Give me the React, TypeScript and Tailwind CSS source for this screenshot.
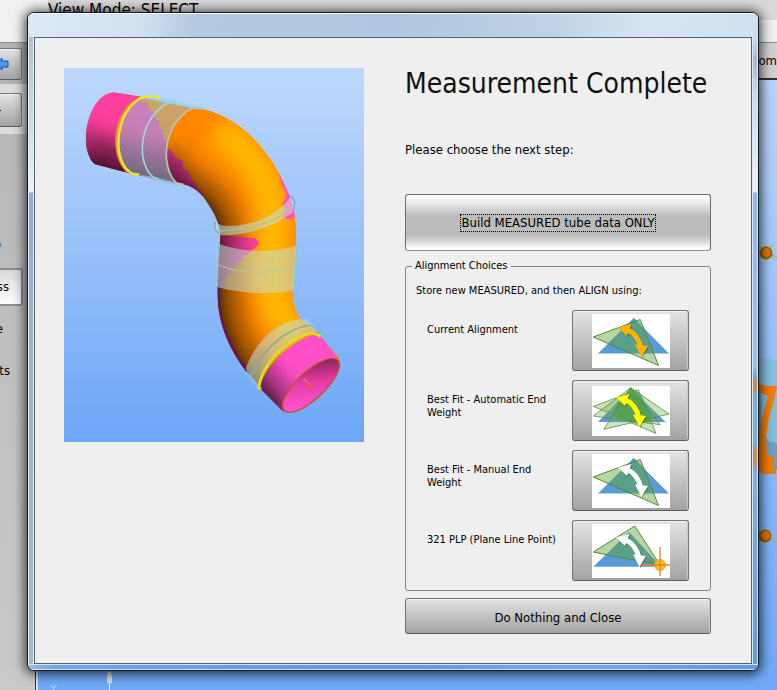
import React from 'react';

type Mode = 'current' | 'auto' | 'manual' | 'plp';

const choices: { mode: Mode; label: string }[] = [
  { mode: 'current', label: 'Current Alignment' },
  { mode: 'auto', label: 'Best Fit - Automatic End Weight' },
  { mode: 'manual', label: 'Best Fit - Manual End Weight' },
  { mode: 'plp', label: '321 PLP (Plane Line Point)' },
];

const grayButton =
  'rounded-[3px] border border-[#737373] border-b-[#5c5c5c] bg-gradient-to-b from-[#e4e4e4] to-[#a3a3a3] shadow-[inset_0_1px_0_#f4f4f4,inset_-1px_0_0_#c9c9c9]';

const SwingArrow: React.FC<{ color: string; transform?: string }> = ({ color, transform }) => (
  <g transform={transform}>
    <g transform="translate(0.8 1)" opacity="0.3">
      <path d="M35 15.500Q46.500 21 49 34" fill="none" stroke="#000" strokeWidth="5" />
      <path d="M26 13.500 39.500 10 35 22ZM49.500 43 43 30.500 56 32Z" fill="#000" />
    </g>
    <path d="M35 15.500Q46.500 21 49 34" fill="none" stroke={color} strokeWidth="5" />
    <path d="M26 13.500 39.500 10 35 22ZM49.500 43 43 30.500 56 32Z" fill={color} />
  </g>
);

const AlignIcon: React.FC<{ mode: Mode }> = ({ mode }) => {
  const green = { fill: '#70ad47', fillOpacity: 0.5, stroke: '#548a35', strokeWidth: 1 };

  if (mode === 'auto') {
    return (
      <svg width="78" height="50" viewBox="0 0 78 50" className="bg-white">
        <path d="M6 36 38.7 2.5 73.7 36Z" fill="#5b9bd5" />
        <g {...green} fillOpacity={0.36} strokeOpacity={0.75}>
          <path d="M1.3 20.3 46.3 3.7 64 47.5Z" />
          <path d="M1.3 30 38.7 1.7 68.3 38.7Z" />
          <path d="M77 28 38.7 1.7 11.7 43.3Z" />
        </g>
        <path d="M38.7 2 49 9 60 30 57 36 45 38 21 30 26 17Z" fill="#4d9a4a" fillOpacity="0.6" />
        <SwingArrow color="#ffff00" transform="translate(-2 -2)" />
      </svg>
    );
  }

  if (mode === 'plp') {
    return (
      <svg width="78" height="54" viewBox="0 0 78 54" className="bg-white">
        <path d="M1.3 42.7 37 8 69 42.7Z" fill="#5b9bd5" />
        <path d="M1.3 28 42.7 2 68 41Z" {...green} />
        <path d="M37 8 16 29 68 41Z" fill="#2f8a78" fillOpacity="0.2" />
        <circle cx="68" cy="41" r="5.5" fill="#ffc000" stroke="#e39a10" strokeWidth="0.8" />
        <path d="M68 23V52M48 41H77.7" stroke="#f07830" strokeWidth="1.3" />
        <SwingArrow color="#ffffff" transform="translate(-2 0)" />
      </svg>
    );
  }

  return (
    <svg width="78" height="54" viewBox="0 0 78 54" className="bg-white">
      <path d="M6 39.5 41.7 4 77 39.5Z" fill="#5b9bd5" />
      <path d="M1.3 23 48.3 5.5 66.5 51.5Z" {...green} />
      <path d="M41.7 4 38 9.5 15 30 35.5 39.5 61 39.5 49 9Z" fill="#2f8a78" fillOpacity="0.2" />
      <SwingArrow color={mode === 'current' ? '#ffb400' : '#ffffff'} />
    </svg>
  );
};

const TubePreview: React.FC = () => {
  const outline =
    'M162 97 243 110 400 144C425 146 443 150 460 156 540 185 600 245 645 318 680 380 706 440 708 500L708 560 700 650C694 700 698 750 725 780L770 815 838 895 840 912C835 960 760 1040 690 1057L668 1054 600 985 555 930C510 870 485 810 476 750 468 690 476 600 481 530 481 500 468 465 440 425 415 385 380 372 350 370L275 355 183 333 105 313C85 300 77 260 77 235 80 160 115 100 162 97Z';
  const darkSide =
    'M60 310 183 350 350 385C420 400 470 460 475 525 470 600 465 680 474 755 485 820 520 890 560 940L665 1065';

  return (
    <svg width="300" height="374" viewBox="12 24 900 1122" className="shrink-0" role="img" aria-label="Measured tube">
      <defs>
        <linearGradient id="sky" x1="0" y1="0" x2="0" y2="1">
          <stop offset="0" stopColor="#bed8fc" />
          <stop offset="0.5" stopColor="#97c0f9" />
          <stop offset="1" stopColor="#6ca6f7" />
        </linearGradient>
        <linearGradient id="bore" gradientUnits="userSpaceOnUse" x1="710" y1="1030" x2="810" y2="900">
          <stop offset="0" stopColor="#ff52d2" />
          <stop offset="0.5" stopColor="#e43ba0" />
          <stop offset="1" stopColor="#6e1a42" />
        </linearGradient>
        <clipPath id="tube">
          <path d={outline} />
        </clipPath>
        <filter id="soft" filterUnits="userSpaceOnUse" x="-300" y="-300" width="1600" height="1800">
          <feGaussianBlur stdDeviation="30" />
        </filter>
        <filter id="softer" filterUnits="userSpaceOnUse" x="-300" y="-300" width="1600" height="1800">
          <feGaussianBlur stdDeviation="14" />
        </filter>
      </defs>
      <rect x="12" y="24" width="900" height="1122" fill="url(#sky)" />

      <g clipPath="url(#tube)">
        <path d={outline} fill="#ff8600" />
        <path
          d="M470 210C570 270 635 360 640 490L630 640C630 730 660 780 720 830"
          fill="none"
          stroke="#ffbc00"
          strokeWidth="90"
          filter="url(#soft)"
        />
        {/* measured surface showing through */}
        <path
          d="M60 80H245V128H265L262 140 280 155 288 180H298V205L310 212V238L322 245V265L330 268 345 285 348 294 370 303 366 322 388 337 392 352 405 370 430 405 400 420H60Z"
          fill="#ff3f9e"
        />
        <path
          d="M470 524 585 535 597 548 588 562 575 570 567 583H550V600L530 608V625H515L512 645H497V665L490 680H482C476 760 500 850 575 940L550 950 460 760Z"
          fill="#ff3f9e"
        />
        <path d="M655 335 690 405 710 470 685 478 668 470 676 445 668 432 680 405 664 370Z" fill="#ff4fc0" />
        <path d="M780 820C700 835 625 910 598 985L668 1070 850 920Z" fill="#ff4fc6" />
        <path d="M-60 300 183 350 360 390" fill="none" stroke="#000" strokeOpacity="0.3" strokeWidth="240" filter="url(#soft)" />
        <path d={darkSide} fill="none" stroke="#000" strokeOpacity="0.42" strokeWidth="140" filter="url(#soft)" />
        <path d={darkSide} fill="none" stroke="#000" strokeOpacity="0.4" strokeWidth="40" filter="url(#softer)" />
      </g>

      {/* upper band */}
      <path
        d="M243 110 400 144C345 165 310 250 325 310 330 340 340 362 352 372L215 343C150 310 165 150 243 110Z"
        fill="#93bfd0"
        fillOpacity="0.5"
      />
      <path d="M285 108 440 148 420 151 320 130 250 118Z" fill="#8fd0ec" fillOpacity="0.6" />
      <path d="M235 343 280 350 370 372 345 376 270 358Z" fill="#8fc4d4" fillOpacity="0.7" />
      <path d="M236 118C160 155 150 290 205 335" fill="none" stroke="#ee9428" strokeWidth="9" />
      <path d="M300 116C285 106 245 106 228 124 165 170 155 310 218 341L238 344" fill="none" stroke="#eeea28" strokeWidth="7" />
      <path d="M365 130C345 124 325 126 308 138 235 195 230 310 280 352L296 357" fill="none" stroke="#a5d2db" strokeWidth="5" />
      <path d="M440 149C420 140 395 141 378 156 308 210 302 325 350 369L370 373" fill="none" stroke="#c0c2a4" strokeWidth="5" />

      {/* middle band */}
      <path
        d="M470 486C478 500 500 497 530 497 590 490 650 465 690 413L704 428C710 440 704 458 690 463 630 505 550 530 480 525 465 515 461 494 470 486Z"
        fill="#c0e0d8"
        fillOpacity="0.55"
      />
      <path d="M466 486C462 500 466 515 480 522M693 408 704 426 700 455" fill="none" stroke="#739da0" strokeWidth="4" strokeOpacity="0.75" />
      <path d="M480 512C560 510 640 490 690 448" fill="none" stroke="#b5c092" strokeWidth="3" />

      {/* lower band */}
      <path d="M470 549C535 575 640 583 713 555L705 680 697 692C620 705 540 700 474 682L466 675Z" fill="#c0e0d8" fillOpacity="0.53" />
      <path d="M474 550 467 675M711 557 703 680" stroke="#83c4df" strokeWidth="6" strokeOpacity="0.75" />
      <path d="M474 614C540 643 640 643 705 620" fill="none" stroke="#b4c8a0" strokeWidth="3" />

      {/* end band */}
      <path
        d="M557 925C585 850 640 790 720 777L745 777 762 800 770 817C700 835 620 900 598 987L570 952Z"
        fill="#c0e0d8"
        fillOpacity="0.55"
      />
      <path d="M573 950C600 880 670 805 752 795L763 805" fill="none" stroke="#88aaa0" strokeWidth="5" />
      <path d="M557 935 600 985M725 778 745 782 765 810" stroke="#8bcbe7" strokeWidth="6" fill="none" strokeOpacity="0.7" />
      <path d="M604 985H596C604 910 690 826 755 820L778 826 777 833" fill="none" stroke="#dfdc18" strokeWidth="8" />

      <ellipse cx="753" cy="976" rx="110" ry="41" transform="rotate(-43 753 976)" fill="url(#bore)" stroke="#b85a23" strokeWidth="4" />
      <path d="M730 953 751 978" stroke="#e88a65" strokeWidth="3" />
      <circle cx="751" cy="978" r="6" fill="#f05a20" />
    </svg>
  );
};

const Marker: React.FC = () => (
  <svg width="19" height="20" viewBox="0 0 19 20">
    <path d="M8 0V20M1 2 17 17M1 17 15 2M9 10 19 14" stroke="#93b83c" strokeWidth="1" />
    <circle cx="8" cy="10" r="6.4" fill="#a75600" />
    <circle cx="8.5" cy="9.500" r="4.4" fill="#dc7c00" />
  </svg>
);

const Workspace: React.FC = () => (
  <div className="flex min-h-screen flex-col bg-[#b9b9b9] text-black">
    <header className="flex h-[43px] border-b border-[#8c8c8c] bg-[#f0f0f0]">
      <div className="w-12 shrink-0" />
      <div className="h-5 flex-1 bg-[#d9d9d9] text-[17px] leading-5 whitespace-nowrap">View Mode: SELECT</div>
    </header>
    <div className="flex flex-1">
      <nav className="flex w-9 shrink-0 flex-col items-start border-r border-[#303030] bg-gradient-to-b from-[#b6b6b6] to-[#cacaca]">
        <div className="w-full bg-[#b3b3b3] pt-[5px] pb-1">
          <button aria-label="Back" className={`flex h-8 w-[22px] items-center rounded-l-none border-l-0 ${grayButton}`}>
            <svg width="9" height="14" viewBox="0 0 9 14">
              <path d="M-4 7 2 1V4H8V10H2V13Z" fill="#419bf1" stroke="#1451a3" />
            </svg>
          </button>
        </div>
        <div className="w-full bg-[#dcdcdc] pt-[9px] pb-[7px]">
          <button aria-label="Remove" className={`flex h-[34px] w-[22px] items-center rounded-l-none border-l-0 ${grayButton}`}>
            <span className="h-px w-px bg-black" />
          </button>
        </div>
        <div className="mt-[109px] h-1 w-px bg-[#3f83c7]" />
        <button className="mt-[21px] flex h-[38px] w-[23px] items-center justify-end rounded-r-[3px] border-2 border-l-0 border-[#8c8c8c] bg-gradient-to-b from-[#d9d9d9] to-white pr-3 text-[13px]">
          ss
        </button>
        <span className="mt-[13px] flex w-[3px] justify-end text-[13px] leading-5">e</span>
        <span className="mt-[22px] flex w-[10px] justify-end text-[13px] leading-5">ts</span>
      </nav>
      <div className="flex flex-1 flex-col">
        <div className="flex h-[37px] items-center justify-end border-b-2 border-[#303030] bg-[#d0d0d0] text-[13px]">om</div>
        <main className="relative flex-1 border-l-2 border-[#e4e4e4] bg-gradient-to-b from-[#b9d4fb] to-[#6fa8f7]">
          <div className="absolute top-[163px] right-0">
            <Marker />
          </div>
          <div className="absolute top-[278px] right-0">
            <svg width="26" height="120" viewBox="0 0 26 120">
              <path d="M0 5 8 0 26 2V95H18L0 84Z" fill="#85bfe0" />
              <path d="M0 30H10V78L26 86V112H8V40Z" fill="#6f9ec5" />
              <path d="M14 38H26V84H18Z" fill="#7fc0da" />
              <path d="M8 26 16 28H26L23 42 18 60 15 78 16 98 23 98V112H25V116H12L8 112V76L11 60 17 38 8 34Z" fill="#f77c00" />
            </svg>
          </div>
          <div className="absolute top-[446px] right-px">
            <Marker />
          </div>
          <svg className="absolute bottom-0 left-0" width="90" height="20" viewBox="0 0 90 20">
            <path d="M71.500 0V20" stroke="#f4f4f4" />
            <path d="M70 2H73L74 6V13H69V6Z" fill="#dededb" />
            <path d="M12.500 15 15.500 18.500 18.500 15M15.500 18V21" fill="none" stroke="#cfe2fb" />
          </svg>
        </main>
      </div>
    </div>
  </div>
);

const MeasurementDialog: React.FC = () => (
  <div
    role="dialog"
    aria-labelledby="dialog-title"
    className="overflow-hidden rounded-[7px] border border-[#161c26] bg-[#dfe9f5] shadow-[0_1px_12px_2px_rgba(0,0,0,0.75)]"
  >
    <div className="h-6 border-t border-[#f4faff] bg-[linear-gradient(100deg,#dce9f5_0%,#d3e2f0_15%,#b4cae2_23%,#aec6df_50%,#bfd3e6_72%,#d7e5f2_85%,#cfe0f0_100%)]" />
    <div className="flex">
      <div className="w-[6px] border-x border-[#e2eef9] bg-[linear-gradient(to_bottom,#b2c0cf_0px,#d5e0ea_100px,#eef4f8_155px,#93adc9_156px,#9db3c7_300px,#a3b9cf_100%)]" />
      <div className="flex min-w-0 flex-1 gap-[41px] border border-[#56616f] bg-[#efefef] pt-[30px] pr-10 pb-[29px] pl-[29px] text-black">
        <TubePreview />
        <div className="flex min-w-0 flex-1 flex-col">
          <h1 id="dialog-title" className="text-[28px] leading-8 whitespace-nowrap text-[#111]">
            Measurement Complete
          </h1>
          <p className="mt-10 text-[13px] leading-5">Please choose the next step:</p>
          <button
            autoFocus
            className="mt-[34px] flex h-[57px] items-center justify-center rounded-[3px] border border-[#6c6c6c] border-b-[#909090] bg-[linear-gradient(to_bottom,#ffffff_0%,#e4e4e4_18%,#bcbcbc_38%,#bcbcbc_74%,#ffffff_98%)] pt-px text-[13px] outline-none"
          >
            <span className="border border-dotted border-black leading-4">Build MEASURED tube data ONLY</span>
          </button>
          <fieldset className="mt-[7px] rounded-[3px] border border-[#858585] pr-[21px] pb-[9px] pl-[10px] text-[11px] leading-[13px]">
            <legend className="-ml-1 px-[3px] leading-4">Alignment Choices</legend>
            <p className="mt-[10px]">Store new MEASURED, and then ALIGN using:</p>
            <div className="mt-[13px] flex flex-col gap-[9px]">
              {choices.map(({ mode, label }) => (
                <div key={mode} className="flex items-start justify-between pl-[11px]">
                  <label htmlFor={`align-${mode}`} className="w-[130px] pt-[13px]">
                    {label}
                  </label>
                  <button id={`align-${mode}`} className={`flex h-[61px] w-[117px] items-center justify-center ${grayButton}`}>
                    <AlignIcon mode={mode} />
                  </button>
                </div>
              ))}
            </div>
          </fieldset>
          <button className={`mt-[7px] h-9 pt-1 text-[13px] ${grayButton}`}>Do Nothing and Close</button>
        </div>
      </div>
      <div className="w-[6px] border-x border-[#d9e9fb] bg-[linear-gradient(to_bottom,#cfdeec_0px,#a9b6c6_22px,#cddcec_60px,#edf3fb_155px,#8fb8ec_156px,#9ec2ef_330px,#7fa3b8_340px,#c98b58_345px,#c98b58_350px,#7db0d0_360px,#7bb0d0_405px,#c98b58_415px,#c98b58_425px,#7faee8_436px,#6399e0_100%)]" />
    </div>
    <div className="h-[6px] border-y border-[#cfe3fb] bg-[linear-gradient(to_right,#a3b9d0_0px,#6da4ea_30px,#6298e2_50%,#72a8ee_75%,#6298e2_100%)]" />
  </div>
);

const App: React.FC = () => {
  return (
    <div className="relative overflow-hidden font-['DejaVu_Sans_Condensed','DejaVu_Sans',sans-serif]">
      <Workspace />
      <div className="absolute top-3 right-[18px] left-[27px]">
        <MeasurementDialog />
      </div>
    </div>
  );
};

export default App;
